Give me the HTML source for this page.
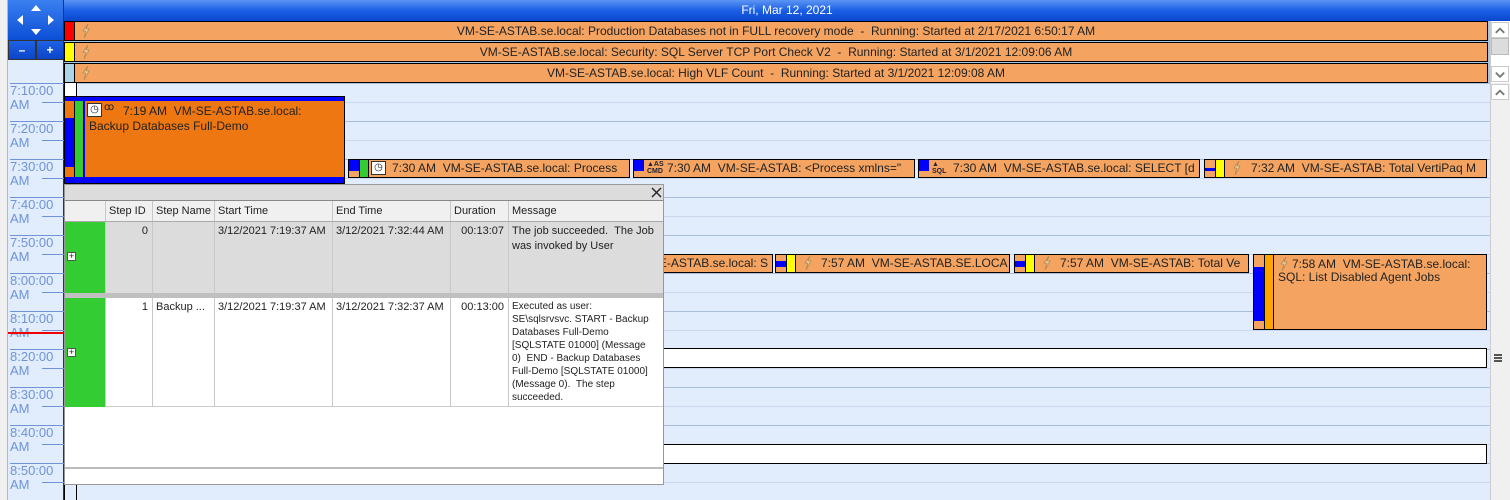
<!DOCTYPE html>
<html><head><meta charset="utf-8"><style>
*{box-sizing:border-box;margin:0;padding:0}
body{width:1510px;height:500px;overflow:hidden;position:relative;background:#e1edfd;font-family:"Liberation Sans",sans-serif;font-size:12px;color:#222}
.a{position:absolute}
.ev{position:absolute;background:#f4a460;border:1px solid #000;overflow:hidden;white-space:nowrap;font-size:12px;line-height:16px}
.tl{position:absolute;left:10px;color:#6f93d6;font-size:13px;line-height:14px}
.hl{position:absolute;height:1px}
.pop{font-size:11px;line-height:15px}
.col{position:absolute;top:0;bottom:0;border-left:1px solid #c8c8c8}
.lt{position:absolute;width:10px;height:14px}
</style></head><body>
<svg width="0" height="0" style="position:absolute"><defs><symbol id="lt" viewBox="0 0 10 14"><path d="M7 0 L2 7 L5 7 L3 14 L8 5 L5 5 Z" fill="#f4d9a8" stroke="#b08850" stroke-width="0.8"/></symbol><symbol id="up" viewBox="0 0 10 10"><path d="M2 7 L5 4 L8 7" fill="none" stroke="#777" stroke-width="1.3"/></symbol><symbol id="dn" viewBox="0 0 10 10"><path d="M2 4 L5 7 L8 4" fill="none" stroke="#777" stroke-width="1.3"/></symbol></defs></svg>
<div class="a" style="left:0;top:0;width:8px;height:500px;background:#f0f0f0;border-right:1px solid #b8b8b8"></div>
<div class="a" style="left:64px;top:0;width:1446px;height:21px;background:linear-gradient(#5c95f4,#1a5fe6 50%,#0a46cc);color:#fff;text-align:center;line-height:21px;font-size:12px">Fri, Mar 12, 2021</div>
<div class="a" style="left:8px;top:0;width:56px;height:40px;background:linear-gradient(#3a80f0,#0c4fd6);border-right:1px solid #333"></div>
<div class="a" style="left:31px;top:5px;width:0;height:0;border-left:5px solid transparent;border-right:5px solid transparent;border-bottom:6px solid #fff"></div>
<div class="a" style="left:31px;top:29px;width:0;height:0;border-left:5px solid transparent;border-right:5px solid transparent;border-top:6px solid #fff"></div>
<div class="a" style="left:17px;top:15px;width:0;height:0;border-top:5px solid transparent;border-bottom:5px solid transparent;border-right:6px solid #fff"></div>
<div class="a" style="left:48px;top:15px;width:0;height:0;border-top:5px solid transparent;border-bottom:5px solid transparent;border-left:6px solid #fff"></div>
<div class="a" style="left:8px;top:40px;width:28px;height:20px;background:linear-gradient(#1e62e6,#0b45c8);border:1px solid #333;color:#fff;text-align:center;font-weight:bold;line-height:18px">–</div>
<div class="a" style="left:36px;top:40px;width:28px;height:20px;background:linear-gradient(#1e62e6,#0b45c8);border:1px solid #333;color:#fff;text-align:center;font-weight:bold;line-height:18px">+</div>
<div class="a" style="left:8px;top:60px;width:56px;height:440px;background:#e1edfd;border-right:1px solid #333"></div>
<div class="a" style="left:64px;top:21px;width:1426px;height:62px;background:#a9c4de"></div>
<div class="ev" style="left:64px;top:21px;width:1424px;height:20px;text-align:center;line-height:18px"><div class="a" style="left:0;top:0;width:10px;height:18px;background:#f00;border-right:1px solid #000"></div><svg class="lt" style="left:16px;top:2px"><use href="#lt"/></svg>VM-SE-ASTAB.se.local: Production Databases not in FULL recovery mode &nbsp;- &nbsp;Running: Started at 2/17/2021 6:50:17 AM</div>
<div class="ev" style="left:64px;top:42px;width:1424px;height:20px;text-align:center;line-height:18px"><div class="a" style="left:0;top:0;width:10px;height:18px;background:#ff0;border-right:1px solid #000"></div><svg class="lt" style="left:16px;top:2px"><use href="#lt"/></svg>VM-SE-ASTAB.se.local: Security: SQL Server TCP Port Check V2 &nbsp;- &nbsp;Running: Started at 3/1/2021 12:09:06 AM</div>
<div class="ev" style="left:64px;top:63px;width:1424px;height:20px;text-align:center;line-height:18px"><div class="a" style="left:0;top:0;width:10px;height:18px;background:#acd4e6;border-right:1px solid #000"></div><svg class="lt" style="left:16px;top:2px"><use href="#lt"/></svg>VM-SE-ASTAB.se.local: High VLF Count &nbsp;- &nbsp;Running: Started at 3/1/2021 12:09:08 AM</div>
<div class="a" style="left:1490px;top:21px;width:20px;height:62px;background:#fff;border-left:1px solid #ccc"></div>
<div class="a" style="left:1491px;top:22px;width:18px;height:16px;border:1px solid #ccc"><svg width="16" height="14" viewBox="0 0 10 10"><use href="#up"/></svg></div>
<div class="a" style="left:1491px;top:38px;width:18px;height:17px;background:#dcdcdc;border:1px solid #bbb"></div>
<div class="a" style="left:1491px;top:66px;width:18px;height:16px;border:1px solid #ccc"><svg width="16" height="14" viewBox="0 0 10 10"><use href="#dn"/></svg></div>
<div class="a" style="left:1490px;top:83px;width:20px;height:417px;background:#f0f0f0;border-left:1px solid #ccc"></div>
<div class="a" style="left:1491px;top:84px;width:18px;height:16px;background:#fff;border:1px solid #ccc"><svg width="16" height="14" viewBox="0 0 10 10"><use href="#up"/></svg></div>
<div class="a" style="left:1494px;top:354px;width:8px;height:8px;border-top:2px solid #555;border-bottom:2px solid #555"></div>
<div class="a" style="left:1494px;top:357px;width:8px;height:2px;background:#555"></div>
<div id="g"></div>
<script>
var h='';var labels=['7:10:00','7:20:00','7:30:00','7:40:00','7:50:00','8:00:00','8:10:00','8:20:00','8:30:00','8:40:00','8:50:00'];
for(var k=0;k<11;k++){var y=83+38*k;
h+='<div class="hl" style="left:77px;top:'+y+'px;width:1413px;background:#a8bcdc"></div>';
h+='<div class="hl" style="left:77px;top:'+(y+19)+'px;width:1413px;background:#c9d8ee"></div>';
h+='<div class="hl" style="left:10px;top:'+y+'px;width:54px;background:#6f93d6"></div>';
h+='<div class="hl" style="left:42px;top:'+(y+19)+'px;width:22px;background:#6f93d6"></div>';
h+='<div class="tl" style="top:'+(y+1)+'px">'+labels[k]+'<br>AM</div>';}
document.getElementById('g').innerHTML=h;
</script>
<div class="a" style="left:8px;top:332px;width:56px;height:2px;background:#e00"></div>
<div class="a" style="left:64px;top:83px;width:1px;height:417px;background:#000"></div>
<div class="a" style="left:76px;top:83px;width:1px;height:417px;background:#000"></div>
<div class="a" style="left:65px;top:83px;width:11px;height:13px;background:#fff"></div>
<div class="a" style="left:64px;top:96px;width:281px;height:88px;background:#00f;border:1px solid #000"></div>
<div class="a" style="left:65px;top:101px;width:9px;height:76px;background:#ee7711"></div>
<div class="a" style="left:65px;top:118px;width:9px;height:49px;background:#00f"></div>
<div class="a" style="left:74px;top:101px;width:10px;height:76px;background:#33cc33;border-left:1px solid #000;border-right:1px solid #000"></div>
<div class="a" style="left:85px;top:101px;width:259px;height:76px;background:#ee7711"></div>
<div class="a" style="left:87px;top:103px;width:15px;height:14px;background:#fff;border:1px solid #333;font-size:10px;line-height:12px;text-align:center">◷</div>
<div class="a" style="left:104px;top:102px;font-size:10px">ꝏ</div>
<div class="a" style="left:89px;top:104px;line-height:15px;font-size:12px"><span style="padding-left:34px">7:19 AM &nbsp;VM-SE-ASTAB.se.local:</span><br>Backup Databases Full-Demo</div>
<div class="ev" style="left:348px;top:159px;width:282px;height:19px"><div class="a" style="left:0;top:0;width:10px;height:17px;background:#00f"></div><div class="a" style="left:0;top:11px;width:10px;height:6px;background:#f4a460"></div><div class="a" style="left:10px;top:0;width:10px;height:17px;background:#33cc33;border-left:1px solid #000;border-right:1px solid #000"></div><div class="a" style="left:22px;top:1px;width:15px;height:14px;background:#fff;border:1px solid #333;font-size:10px;line-height:12px;text-align:center">◷</div><span class="a" style="left:43px;top:0">7:30 AM &nbsp;VM-SE-ASTAB.se.local: Process</span></div>
<div class="ev" style="left:633px;top:159px;width:282px;height:19px"><div class="a" style="left:0;top:0;width:10px;height:17px;background:#00f"></div><div class="a" style="left:0;top:11px;width:10px;height:6px;background:#f4a460"></div><span class="a" style="left:13px;top:1px;font-size:7px;line-height:7px;font-weight:bold;color:#223">▲AS<br>CMD</span><span class="a" style="left:33px;top:0">7:30 AM &nbsp;VM-SE-ASTAB: &lt;Process xmlns="</span></div>
<div class="ev" style="left:918px;top:159px;width:282px;height:19px"><div class="a" style="left:0;top:0;width:10px;height:17px;background:#00f"></div><div class="a" style="left:0;top:11px;width:10px;height:6px;background:#f4a460"></div><span class="a" style="left:13px;top:1px;font-size:7px;line-height:7px;font-weight:bold;color:#223">▲<br>SQL</span><span class="a" style="left:34px;top:0">7:30 AM &nbsp;VM-SE-ASTAB.se.local: SELECT [d</span></div>
<div class="ev" style="left:1204px;top:159px;width:283px;height:19px"><div class="a" style="left:0;top:0;width:10px;height:17px;background:#f4a460"></div><div class="a" style="left:0;top:8px;width:10px;height:3px;background:#00f"></div><div class="a" style="left:10px;top:0;width:10px;height:17px;background:#ff0;border-left:1px solid #000;border-right:1px solid #000"></div><svg class="lt" style="left:27px;top:1px"><use href="#lt"/></svg><span class="a" style="left:46px;top:0">7:32 AM &nbsp;VM-SE-ASTAB: Total VertiPaq M</span></div>
<div class="ev" style="left:600px;top:254px;width:173px;height:19px"><span class="a" style="right:4px;top:0">VM-SE-ASTAB.se.local: S</span></div>
<div class="ev" style="left:775px;top:254px;width:235px;height:19px"><div class="a" style="left:0;top:0;width:10px;height:17px;background:#f4a460"></div><div class="a" style="left:0;top:6px;width:10px;height:6px;background:#00f"></div><div class="a" style="left:10px;top:0;width:10px;height:17px;background:#ff0;border-left:1px solid #000;border-right:1px solid #000"></div><svg class="lt" style="left:27px;top:1px"><use href="#lt"/></svg><span class="a" style="left:45px;top:0">7:57 AM &nbsp;VM-SE-ASTAB.SE.LOCA</span></div>
<div class="ev" style="left:1014px;top:254px;width:235px;height:19px"><div class="a" style="left:0;top:0;width:10px;height:17px;background:#f4a460"></div><div class="a" style="left:0;top:6px;width:10px;height:6px;background:#00f"></div><div class="a" style="left:10px;top:0;width:10px;height:17px;background:#ff0;border-left:1px solid #000;border-right:1px solid #000"></div><svg class="lt" style="left:27px;top:1px"><use href="#lt"/></svg><span class="a" style="left:45px;top:0">7:57 AM &nbsp;VM-SE-ASTAB: Total Ve</span></div>
<div class="ev" style="left:1253px;top:254px;width:234px;height:76px;white-space:normal"><div class="a" style="left:0;top:0;width:10px;height:74px;background:#f4a460"></div><div class="a" style="left:0;top:12px;width:10px;height:54px;background:#00f"></div><div class="a" style="left:10px;top:0;width:10px;height:74px;background:#ffa500;border-left:1px solid #000;border-right:1px solid #000"></div><svg class="lt" style="left:25px;top:2px"><use href="#lt"/></svg><div class="a" style="left:24px;top:3px;line-height:13px;white-space:nowrap"><span style="padding-left:14px">7:58 AM &nbsp;VM-SE-ASTAB.se.local:</span><br>SQL: List Disabled Agent Jobs</div></div>
<div class="a" style="left:600px;top:348px;width:887px;height:20px;background:#fff;border:1px solid #000"></div>
<div class="a" style="left:600px;top:444px;width:887px;height:20px;background:#fff;border:1px solid #000"></div>
<div class="a pop" style="left:64px;top:184px;width:600px;height:301px;background:#fff;border:1px solid #999">
 <div class="a" style="left:0;top:0;width:598px;height:16px;background:#dcdcdc;border-bottom:1px solid #888"></div>
 <svg class="a" style="left:586px;top:2px" width="11" height="11"><path d="M1 1 L10 10 M10 1 L1 10" stroke="#222" stroke-width="1.4"/></svg>
 <div class="a" style="left:0;top:16px;width:598px;height:21px;background:#f0f0f0;border-bottom:1px solid #aaa">
  <div class="col" style="left:40px"></div><div class="col" style="left:87px"></div><div class="col" style="left:149px"></div><div class="col" style="left:267px"></div><div class="col" style="left:385px"></div><div class="col" style="left:443px"></div>
  <span class="a" style="left:44px;top:3px">Step ID</span><span class="a" style="left:91px;top:3px">Step Name</span><span class="a" style="left:153px;top:3px">Start Time</span><span class="a" style="left:271px;top:3px">End Time</span><span class="a" style="left:389px;top:3px">Duration</span><span class="a" style="left:447px;top:3px">Message</span>
 </div>
 <div class="a" style="left:0;top:37px;width:598px;height:71px;background:#dcdcdc">
  <div class="a" style="left:0;top:0;width:40px;height:71px;background:#33cc33"></div>
  <div class="col" style="left:40px"></div><div class="col" style="left:87px"></div><div class="col" style="left:149px"></div><div class="col" style="left:267px"></div><div class="col" style="left:385px"></div><div class="col" style="left:443px"></div>
  <div class="a" style="left:2px;top:30px;width:9px;height:9px;border:1px solid #555;background:#fff;font-size:9px;line-height:7px;text-align:center">+</div>
  <span class="a" style="left:40px;width:43px;text-align:right;top:2px">0</span><span class="a" style="left:153px;top:2px">3/12/2021 7:19:37 AM</span><span class="a" style="left:271px;top:2px">3/12/2021 7:32:44 AM</span><span class="a" style="left:385px;width:54px;text-align:right;top:2px">00:13:07</span><span class="a" style="left:447px;top:2px;width:148px">The job succeeded. &nbsp;The Job was invoked by User</span>
 </div>
 <div class="a" style="left:0;top:108px;width:598px;height:5px;background:#c0c0c0"></div>
 <div class="a" style="left:0;top:113px;width:598px;height:109px;background:#fff;border-bottom:1px solid #ccc">
  <div class="a" style="left:0;top:0;width:40px;height:109px;background:#33cc33"></div>
  <div class="col" style="left:40px"></div><div class="col" style="left:87px"></div><div class="col" style="left:149px"></div><div class="col" style="left:267px"></div><div class="col" style="left:385px"></div><div class="col" style="left:443px"></div>
  <div class="a" style="left:2px;top:50px;width:9px;height:9px;border:1px solid #555;background:#fff;font-size:9px;line-height:7px;text-align:center">+</div>
  <span class="a" style="left:40px;width:43px;text-align:right;top:2px">1</span><span class="a" style="left:91px;top:2px">Backup ...</span><span class="a" style="left:153px;top:2px">3/12/2021 7:19:37 AM</span><span class="a" style="left:271px;top:2px">3/12/2021 7:32:37 AM</span><span class="a" style="left:385px;width:54px;text-align:right;top:2px">00:13:00</span><span class="a" style="left:447px;top:2px;width:150px;font-size:10px;line-height:13px">Executed as user:<br>SE\sqlsrvsvc. START - Backup<br>Databases Full-Demo<br>[SQLSTATE 01000] (Message<br>0) &nbsp;END - Backup Databases<br>Full-Demo [SQLSTATE 01000]<br>(Message 0). &nbsp;The step<br>succeeded.</span>
 </div>
 <div class="a" style="left:0;top:282px;width:598px;height:2px;background:#bbb"></div>
</div>
</body></html>
